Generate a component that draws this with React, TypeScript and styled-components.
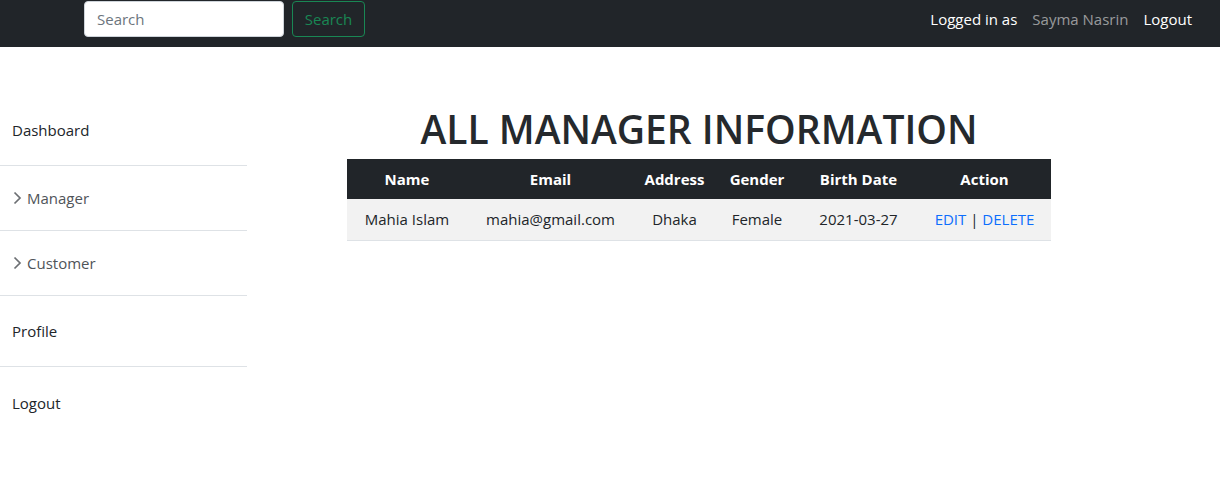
import styled, { createGlobalStyle } from "styled-components"

const font = `"Open Sans", "Noto Sans", "Liberation Sans", sans-serif`

const GlobalStyle = createGlobalStyle`
  html, body {
    margin: 0;
    padding: 0;
    background: #fff;
    font-family: ${font};
    color: #212529;
  }
  * { box-sizing: border-box; }
`

const Navbar = styled('nav')`
  height: 47px;
  background: #212529;
  display: flex;
  align-items: flex-start;
  justify-content: space-between;
  padding: 1px 28px 0 84px;
`

const SearchForm = styled('form')`
  display: flex;
  gap: 8px;
`

const SearchInput = styled('input')`
  width: 200px;
  height: 36px;
  border: 1px solid #ced4da;
  border-radius: 4px;
  padding: 0 12px;
  font-family: ${font};
  font-size: 15px;
  color: #212529;
  outline: none;

  &::placeholder { color: #6c757d; }
`

const SearchButton = styled('button')`
  height: 36px;
  width: 73px;
  background: transparent;
  border: 1px solid #198754;
  border-radius: 4px;
  color: #198754;
  font-family: ${font};
  font-size: 15px;
  padding: 0;
`

const UserBox = styled('div')`
  display: flex;
  align-items: center;
  height: 36px;
  font-size: 15px;
`

const NavText = styled('span')<{ $muted?: boolean; $gap?: number }>`
  color: ${p => (p.$muted ? 'rgba(255,255,255,.55)' : '#fff')};
  margin-left: ${p => p.$gap ?? 0}px;
`

const Page = styled('div')`
  display: flex;
`

const Sidebar = styled('aside')`
  width: 247px;
  padding-top: 48px;
  display: flex;
  flex-direction: column;
`

const SideItem = styled('div')<{ $h: number; $last?: boolean; $sub?: boolean }>`
  height: ${p => p.$h}px;
  display: flex;
  align-items: center;
  padding-left: 12px;
  font-size: 15px;
  color: ${p => (p.$sub ? '#4f5459' : '#212529')};
  border-bottom: ${p => (p.$last ? 'none' : '1px solid #dee2e6')};
  gap: 5px;
`

const Chevron = () => (
  <svg width="10" height="14" viewBox="0 0 10 14" fill="none">
    <path d="M2.5 1.5 L8 7 L2.5 12.5" stroke="#6c6f73" strokeWidth="1.7" />
  </svg>
)

const Main = styled('main')`
  padding-top: 58px;
  padding-left: 100px;
  display: flex;
  flex-direction: column;
  width: 704px;
  box-sizing: content-box;
`

const Title = styled('h1')`
  margin: 0 0 6px;
  text-align: center;
  font-size: 39px;
  font-weight: 600;
  line-height: 48px;
  color: #25292d;
  white-space: nowrap;
`

const Table = styled('table')`
  width: 704px;
  border-collapse: collapse;
  table-layout: fixed;
  font-size: 15px;
`

const Th = styled('th')<{ $w: number }>`
  width: ${p => p.$w}px;
  height: 40px;
  background: #212529;
  color: #fff;
  font-weight: 700;
  text-align: center;
  padding: 0;
`

const Td = styled('td')`
  height: 41px;
  background: #f2f2f2;
  text-align: center;
  border-bottom: 1px solid #dee2e6;
  padding: 0;
  color: #212529;
`

const Link = styled('a')`
  color: #0d6efd;
  text-decoration: none;
`

const columns: [string, number][] = [
  ['Name', 120],
  ['Email', 167],
  ['Address', 81],
  ['Gender', 84],
  ['Birth Date', 119],
  ['Action', 133],
]

const App = (): JSX.Element => {
  return (
    <>
      <GlobalStyle />
      <Navbar>
        <SearchForm onSubmit={e => e.preventDefault()}>
          <SearchInput placeholder="Search" />
          <SearchButton type="submit">Search</SearchButton>
        </SearchForm>
        <UserBox>
          <NavText>Logged in as</NavText>
          <NavText $muted $gap={15}>Sayma Nasrin</NavText>
          <NavText $gap={15}>Logout</NavText>
        </UserBox>
      </Navbar>

      <Page>
        <Sidebar>
          <SideItem $h={71}>Dashboard</SideItem>
          <SideItem $h={65} $sub><Chevron />Manager</SideItem>
          <SideItem $h={65} $sub><Chevron />Customer</SideItem>
          <SideItem $h={71}>Profile</SideItem>
          <SideItem $h={71} $last>Logout</SideItem>
        </Sidebar>

        <Main>
          <Title>ALL MANAGER INFORMATION</Title>
          <Table>
            <thead>
              <tr>
                {columns.map(([c, w]) => <Th key={c} $w={w}>{c}</Th>)}
              </tr>
            </thead>
            <tbody>
              <tr>
                <Td>Mahia Islam</Td>
                <Td>mahia@gmail.com</Td>
                <Td>Dhaka</Td>
                <Td>Female</Td>
                <Td>2021-03-27</Td>
                <Td><Link href="#">EDIT</Link> | <Link href="#">DELETE</Link></Td>
              </tr>
            </tbody>
          </Table>
        </Main>
      </Page>
    </>
  )
}

export default App
